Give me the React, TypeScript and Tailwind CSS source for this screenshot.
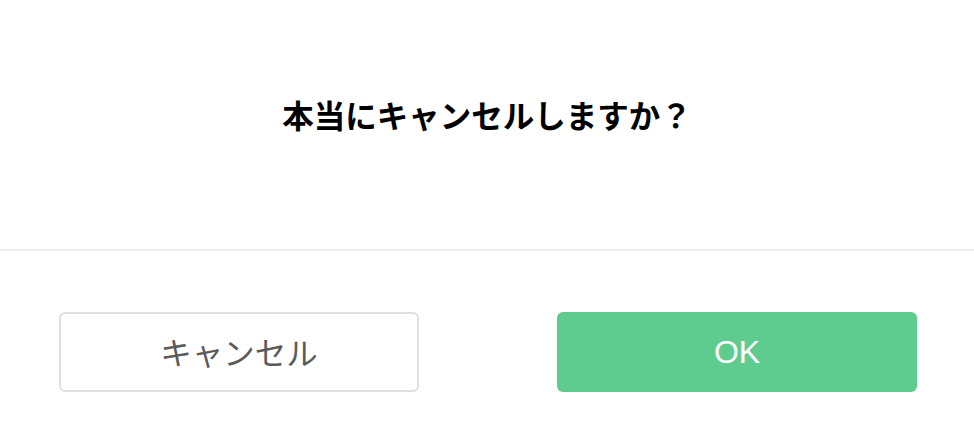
import React from "react";

export default function App() {
  return (
    <div
      className="w-[974px] h-[448px] bg-white flex flex-col"
      style={{ fontFamily: '"Liberation Sans", "Noto Sans CJK JP", sans-serif' }}
    >
      <div className="h-[249px] flex items-center justify-center pb-[20px]">
        <h1
          className="text-[31.5px] font-bold text-black leading-none"
          style={{ fontFamily: '"Noto Sans CJK JP", sans-serif' }}
        >
          本当にキャンセルしますか？
        </h1>
      </div>
      <div className="h-[2px] bg-[#eeeeee]" />
      <div className="flex justify-between pl-[59px] pr-[57px] pt-[61px]">
        <button
          className="w-[360px] h-[80px] rounded-[6px] border-2 border-[#e0e0e0] bg-white text-[#5a5a5a] text-[31.5px] font-normal flex items-center justify-center"
          style={{ fontFamily: '"Noto Sans CJK JP", sans-serif' }}
        >
          キャンセル
        </button>
        <button className="w-[360px] h-[80px] rounded-[6px] bg-[#5ecb8f] text-white text-[32px] flex items-center justify-center">
          OK
        </button>
      </div>
    </div>
  );
}
